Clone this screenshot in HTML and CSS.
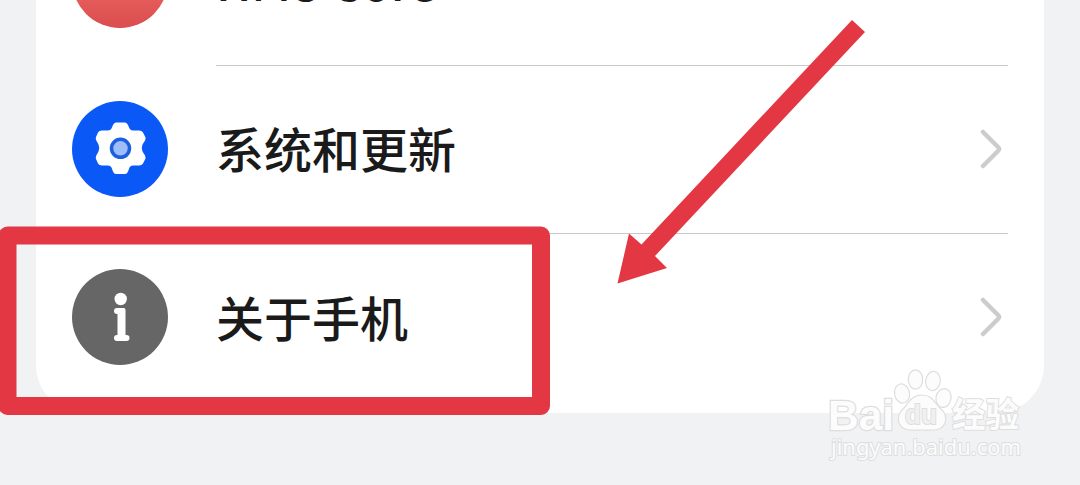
FILE: index.html
```html
<!DOCTYPE html>
<html lang="zh-CN">
<head>
<meta charset="utf-8">
<title>设置</title>
<link rel="stylesheet" href="styles.css">
</head>
<body>
<main class="screen">
  <section class="card">
    <div class="row">
      <span class="icon icon-red"></span>
      <div class="content"><span class="label latin">HMS Core</span></div>
    </div>
    <div class="row">
      <svg class="icon" viewBox="0 0 96 96">
        <circle cx="48" cy="48" r="48" fill="#0a59f7"/>
        <path d="M44 21.500H53Q55 21.500 56 24L57.500 27.500Q58.500 29.500 61 29.500H67Q70 29.500 71 31.500L73.300 36Q74 37.500 73 39.500L70.500 43.500Q69 47 70.500 50.500L73 54.500Q74 56.500 73.300 58L71 62.500Q70 64.500 67 64.500H61Q58.500 64.500 57.500 66.500L56 70.500Q55 73 53 73H44Q42 73 41 70.500L39.500 66.500Q38.500 64.500 36 64.500H30Q27 64.500 26 62.500L24 58Q23.300 56.500 24.300 54.500L26.500 50.500Q28 47 26.500 43.500L24.300 39.500Q23.300 37.500 24 36L26 31.500Q27 29.500 30 29.500H36Q38.500 29.500 39.500 27.500L41 24Q42 21.500 44 21.500Z" fill="#fff"/>
        <circle cx="48.500" cy="47.300" r="9" fill="#a0bdfb" stroke="#1c5fdf" stroke-width="3.500"/>
      </svg>
      <div class="content"><span class="label">系统和更新</span>
        <svg class="chevron" viewBox="0 0 22 40"><path d="M3 3L18 18Q20 20 18 22L3 37"/></svg></div>
    </div>
    <div class="row">
      <svg class="icon" viewBox="0 0 96 96">
        <circle cx="48" cy="48" r="48" fill="#666"/>
        <circle cx="48.700" cy="30" r="6.200" fill="#fff"/>
        <path d="M45 42h5M45 69h9.500" fill="none" stroke="#fff" stroke-width="6" stroke-linecap="round"/>
        <path d="M45 39h6.500q2 0 2 2v28h-8V44h-.5z" fill="#fff"/>
      </svg>
      <div class="content"><span class="label">关于手机</span>
        <svg class="chevron" viewBox="0 0 22 40"><path d="M3 3L18 18Q20 20 18 22L3 37"/></svg></div>
    </div>
  </section>
  <svg class="overlay" viewBox="0 0 1080 485">
    <g class="watermark">
      <text class="mark-bai" x="828" y="430" textLength="66" lengthAdjust="spacingAndGlyphs">Bai</text>
      <ellipse cx="902" cy="393.500" rx="7.500" ry="9.700" transform="rotate(-12 902 393.500)"/>
      <ellipse cx="915.500" cy="379.500" rx="7.200" ry="9.700"/>
      <ellipse cx="933" cy="381" rx="7.300" ry="9.700" transform="rotate(8 933 381)"/>
      <ellipse cx="943.500" cy="398" rx="7.500" ry="9.500" transform="rotate(12 943.500 398)"/>
      <path d="M922 395C912 395 909 402 904 408C899 412 897 418 899 423C903 432 912 430 922 430C932 430 941 432 945 423C947 417 945 412 940 408C934 402 932 395 922 395Z"/>
      <text class="mark-du" x="905" y="424" textLength="32" lengthAdjust="spacingAndGlyphs">du</text>
      <text class="mark-cn" x="952" y="427" textLength="67" lengthAdjust="spacingAndGlyphs">经验</text>
      <text class="mark-url" x="831" y="455" textLength="190" lengthAdjust="spacingAndGlyphs">jingyan.baidu.com</text>
    </g>
    <rect class="frame" x="7.500" y="235.500" width="533.500" height="170.500"/>
    <path class="arrow" d="M852 20L865 32L655 256L667 268L617.500 283.500L629 233.500L641.500 244.500Z"/>
  </svg>
</main>
</body>
</html>
```
FILE: styles.css
```css
* { box-sizing: border-box; }
body { margin: 0; background: #f1f2f4; font-family: "Noto Sans CJK SC", sans-serif; }
.screen { position: relative; width: 1080px; height: 485px; overflow: hidden; display: flex; flex-direction: column; padding: 0 36px; }
.card { flex: none; margin-top: -103px; padding: 0 36px 12px; background: #fff; border-radius: 0 0 48px 48px; }
.row { display: flex; height: 168px; align-items: center; gap: 48px; }
.icon { flex: none; display: block; width: 96px; height: 96px; }
.icon-red { margin-top: -2px; border-radius: 50%; background: linear-gradient(#ee6a66 40%, #db4d4e); }
.content { flex: 1; height: 170px; display: flex; align-items: center; justify-content: space-between; border-bottom: 1px solid #c8c9cb; }
.row:last-child .content { border-bottom: 0; }
.label { padding-bottom: 3px; font-size: 48px; line-height: 72px; font-weight: 500; color: #1a1a1a; }
.latin { padding-bottom: 2px; letter-spacing: -0.2px; }
.chevron { width: 22px; height: 40px; margin-right: 6px; fill: none; stroke: #ccc; stroke-width: 4.5px; stroke-linecap: round; }
.overlay { position: absolute; top: 0; left: 0; width: 1080px; height: 485px; }
.frame { fill: none; stroke: #e33843; stroke-width: 18px; stroke-linejoin: round; }
.arrow { fill: #e33843; }
.watermark { fill: #fcfcfc; stroke: #dedede; stroke-width: 1.2px; }
.watermark text { paint-order: stroke; stroke-width: 2px; }
.watermark .mark-bai { font: 700 43px "Liberation Sans", sans-serif; stroke-width: 2.5px; }
.mark-du { font: 700 27px "Liberation Sans", sans-serif; fill: #f0f0f0; }
.mark-cn { font: 700 34px "Noto Sans CJK SC", sans-serif; }
.mark-url { font: 400 22px "Noto Sans", sans-serif; }
```
